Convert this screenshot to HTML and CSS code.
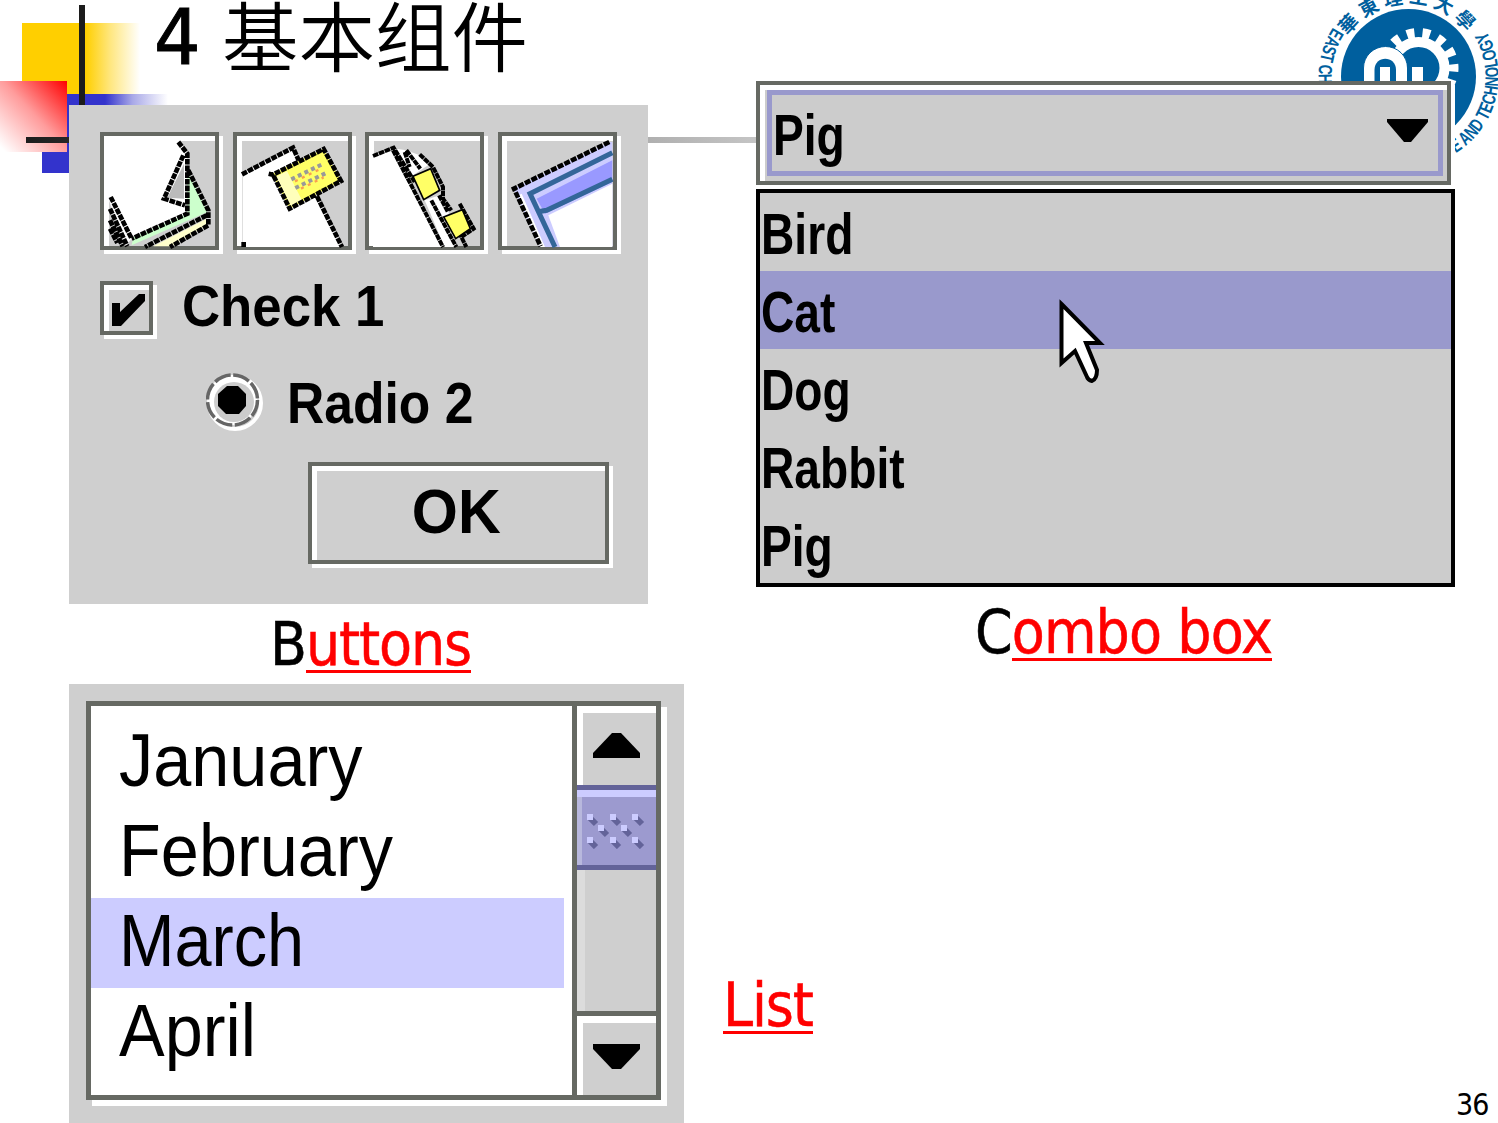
FILE: index.html
```html
<!DOCTYPE html>
<html lang="zh-CN">
<head>
<meta charset="utf-8">
<title>4 基本组件</title>
<link rel="stylesheet" href="styles.css">
</head>
<body>
<div class="slide">
  <div class="decor">
    <div class="decor-yellow"></div>
    <div class="decor-blue"></div>
    <div class="decor-red"></div>
    <div class="decor-vline"></div>
    <div class="decor-hline"></div>
  </div>
  <svg class="logo" viewBox="0 0 200 190" width="200" height="190">
    <defs>
      <path id="ring-latin" d="M33 27.500 A90 90 0 1 0 184 27.500"/>
      <path id="ring-han" d="M47.900 36.200 A73 73 0 0 1 171.700 40"/>
    </defs>
    <circle cx="108.5" cy="76.5" r="67.5" fill="#005f9e"/>
    <g fill="none" stroke="#fff">
      <circle cx="118.5" cy="68" r="26" stroke-width="10"/>
      <circle cx="118.5" cy="68" r="34.500" stroke-width="11" stroke-dasharray="7.500 7.980" stroke-dashoffset="4"/>
    </g>
    <path d="M63.500 96V68a22 21.500 0 0 1 44 0v28z" fill="#fff" stroke="#005f9e" stroke-width="1"/>
    <path d="M74.500 96V70c0-15 21.500-15 21.500 0v26z" fill="#005f9e"/>
    <path d="M80 67h10v29H80zM112 67h11v29H112z" fill="#fff"/>
    <path d="M107 60h5v36h-5z" fill="#005f9e"/>
    <text class="logo-latin"><textPath href="#ring-latin" textLength="382" lengthAdjust="spacingAndGlyphs">EAST CHINA UNIVERSITY OF SCIENCE AND TECHNOLOGY</textPath></text>
    <text class="logo-han"><textPath href="#ring-han">華東理工大學</textPath></text>
  </svg>

  <header class="title"><span class="title-num">4</span><span class="title-text">基本组件</span></header>

  <main class="columns">
    <section class="col-left">
      <div class="panel buttons-panel">
        <div class="icon-row">
          <div class="etched icon-btn">
            <svg viewBox="30 35 357 354">
              <path d="M57 60H270L290 95V280L125 355 105 378 57 240Z" fill="#fff"/>
              <path d="M292 160L300 165 352 275 125 375 130 350 292 280Z" fill="#cfc"/>
              <path d="M190 378L350 295V315L245 378Z" fill="#ffc"/>
              <path d="M282 130L232 232 282 235Z" fill="#bbb"/>
              <g fill="none" stroke="#000" stroke-width="14" stroke-dasharray="17 3">
                <path d="M265 65L292 100V280L125 355M280 105L222 235 285 255M295 150L355 270V315L240 380M350 285L165 380"/>
                <path d="M62 230L125 355M60 265L112 378M60 300L98 378M60 325L82 368"/>
              </g>
            </svg>
          </div>
          <div class="etched icon-btn">
            <svg viewBox="428 35 357 354">
              <path d="M457 160L608 80 625 120 545 165 595 265 680 228 755 380H457Z" fill="#fff"/>
              <path d="M545 160L700 85 752 182 598 265Z" fill="#ff6"/>
              <path d="M555 170L590 152 635 240 602 258Z" fill="#ffb"/>
              <g fill="none" stroke="#000" stroke-width="14" stroke-dasharray="17 3">
                <path d="M455 162L608 82 625 120M535 160L548 163 700 86 752 182 598 265 548 163M680 228L755 380M460 365V380"/>
              </g>
              <path d="M603 177L695 132M615 203L707 158" stroke="#999" stroke-width="12" stroke-dasharray="12 10"/>
              <path d="M614 183L690 146M632 205L700 171" stroke="#f9a050" stroke-width="7" stroke-dasharray="9 14"/>
            </svg>
          </div>
          <div class="etched icon-btn">
            <svg viewBox="16 35 357 354">
              <path d="M40 105L105 80 248 380H40ZM110 85L140 90 180 105 205 135 160 165ZM195 240L240 225 265 270 290 380H255Z" fill="#fff"/>
              <g fill="none" stroke="#000" stroke-width="12" stroke-dasharray="17 2">
                <path d="M40 107L102 82 165 185M100 90L160 205 250 380M140 90L182 145M135 95L150 140M180 102L220 140 250 200 250 235 275 270M238 225L265 275M300 250L342 325 305 350 320 380M215 240L290 380"/>
              </g>
              <path d="M160 168L213 145 240 210 192 238ZM252 290L308 268 332 325 288 355Z" fill="#ff6" stroke="#000" stroke-width="5"/>
            </svg>
          </div>
          <div class="etched icon-btn">
            <svg viewBox="414 35 357 354">
              <path d="M460 205L750 65H757V380H540Z" fill="#ccf"/>
              <path d="M530 235L757 120V185L555 280Z" fill="#99f"/>
              <path d="M565 285L757 190V380H600Z" fill="#fff"/>
              <path d="M475 225L485 220 555 380H540Z" fill="#fff"/>
              <path d="M757 97L510 220 585 380M530 275L560 270 757 177" fill="none" stroke="#369" stroke-width="15"/>
              <path d="M757 113L530 228" fill="none" stroke="#ccf" stroke-width="9"/>
              <path d="M748 65L462 205 542 378" fill="none" stroke="#000" stroke-width="14" stroke-dasharray="18 4"/>
            </svg>
          </div>
        </div>
        <div class="option">
          <div class="etched checkbox"><svg viewBox="0 0 53 54"><path d="M12 22H20V31L39 13H45V20L21 45H12Z"/></svg></div>
          <span class="swing check-label">Check 1</span>
        </div>
        <div class="option option-radio">
          <svg class="radio" viewBox="0 0 58 58">
            <circle cx="29" cy="30" r="26" fill="none" stroke="#fff" stroke-width="4"/>
            <circle cx="26.500" cy="27" r="25" fill="#fff" stroke="#666" stroke-width="3.500" stroke-dasharray="17 2.630"/>
            <circle cx="28" cy="29" r="20" fill="#ccc"/>
            <path d="M21 13H32L40 21V33L33 41H20L12 33V21Z"/>
          </svg>
          <span class="swing radio-label">Radio 2</span>
        </div>
        <div class="etched ok"><span class="swing ok-label">OK</span></div>
      </div>
      <p class="caption caption-buttons">B<a>uttons</a></p>
      <div class="list-line">
        <div class="panel list-panel">
          <div class="list-box">
            <ul class="months">
              <li><span>January</span></li>
              <li><span>February</span></li>
              <li class="selected"><span>March</span></li>
              <li><span>April</span></li>
            </ul>
            <div class="scrollbar">
              <div class="sb-btn"><svg viewBox="0 0 47 25"><path d="M0 25V20L19 0H28L47 20V25Z"/></svg></div>
              <div class="sb-thumb">
                <svg viewBox="0 0 60 38">
                  <path d="M4 7L10 13M27 7L33 13M50 7L56 13M15 18L21 24M38 18L44 24M4 30L10 36M27 30L33 36M50 30L56 36" stroke="#636399" stroke-width="6"/>
                  <path d="M1 3h6v6H1zM24 3h6v6h-6zM46 3h6v6h-6zM12 14h6v6h-6zM35 14h6v6h-6zM1 26h6v6H1zM24 26h6v6h-6zM46 26h6v6h-6z" fill="#ccf"/>
                </svg>
              </div>
              <div class="sb-track"></div>
              <div class="sb-btn sb-down"><svg viewBox="0 0 47 25"><path d="M0 0V5L19 25H28L47 5V0Z"/></svg></div>
            </div>
          </div>
        </div>
        <p class="caption caption-list"><a>List</a></p>
      </div>
    </section>

    <section class="col-right">
      <div class="etched combo">
        <div class="combo-field">
          <span class="swing item-text">Pig</span>
          <svg class="combo-arrow" viewBox="0 0 41 23"><path d="M0 0H41V3L24 23H17L0 3Z"/></svg>
        </div>
      </div>
      <ul class="popup">
        <li><span class="swing item-text">Bird</span></li>
        <li class="selected"><span class="swing item-text">Cat</span></li>
        <li><span class="swing item-text">Dog</span></li>
        <li><span class="swing item-text">Rabbit</span></li>
        <li><span class="swing item-text">Pig</span></li>
      </ul>
      <p class="caption caption-combo">C<a>ombo box</a></p>
    </section>
  </main>

  <svg class="pointer" viewBox="0 0 46 86"><path d="M2.500 5L41 44H27L38 71Q38 80 33 82Q29 81 28 78L16 52L2.500 64Z" fill="#fff" stroke="#000" stroke-width="4"/></svg>
  <div class="page-no">36</div>
</div>
</body>
</html>
```
FILE: styles.css
```css
* { box-sizing: border-box; }
body { margin: 0; background: #fff; }
p, ul { margin: 0; padding: 0; list-style: none; }
svg { display: block; }

.slide {
  position: relative;
  width: 1498px;
  height: 1123px;
  overflow: hidden;
  background: #fff;
  color: #000;
  font-family: "DejaVu Sans Condensed", "DejaVu Sans", "Noto Sans CJK SC", sans-serif;
  font-stretch: condensed;
}

/* slide master ornament, behind the content */
.decor div { position: absolute; }
.decor-yellow { left: 22px; top: 23px; width: 118px; height: 71px; background: linear-gradient(90deg, #ffcf00 54%, #ffe780 75%, #fff); }
.decor-blue { left: 42px; top: 94px; width: 126px; height: 79px; background: linear-gradient(90deg, #3333cc 50%, #a9a9e8 72%, #fff); }
.decor-red { left: 0; top: 81px; width: 67px; height: 71px; background: linear-gradient(to bottom left, #f00, #ff9c9c 48%, #fff 96%); }
.decor-vline { left: 79px; top: 5px; width: 6px; height: 110px; background: #1c1c1c; }
.decor-hline { left: 26px; top: 137px; width: 1300px; height: 6px; background: linear-gradient(90deg, #1c1c1c, #2a2a2a 4%, #b0b0b0 48%, #c4c4c4 56%, #fff); }

.logo { position: absolute; left: 1300px; top: 0; }
.logo text { fill: #005f9e; }
.logo-latin { font: bold 19px "Liberation Sans", sans-serif; }
.logo-han { font: bold 19px "Noto Sans CJK TC", sans-serif; letter-spacing: 4.800px; }

.title { position: relative; display: flex; height: 81px; padding-left: 154px; }
.title-num { width: 69px; font-family: "DejaVu Sans"; font-size: 77px; font-stretch: normal; transform: scaleX(.95); transform-origin: left; line-height: 76px; -webkit-text-stroke: 1px #000; }
.title-text { margin-top: -5px; margin-left: -1px; font-family: "Noto Sans CJK SC", sans-serif; font-size: 76.500px; font-weight: 350; line-height: 76px; }

.columns { position: relative; display: flex; padding-left: 69px; }
.col-left { width: 687px; padding-top: 24px; flex: none; }
.col-right { width: 699px; flex: none; }

.caption { font-size: 60px; letter-spacing: -1.120px; white-space: nowrap; -webkit-text-stroke: .5px; }
.caption a { color: #f00; display: inline-block; position: relative; }
.caption a::after { content: ""; position: absolute; left: 0; right: 0; bottom: 11px; height: 3px; background: #f00; }
.caption-buttons { height: 80px; padding-left: 201px; line-height: 80px; }
.caption-combo { padding-left: 219px; line-height: 90px; letter-spacing: -.9px; }
.caption-list { padding: 281px 0 0 39px; line-height: 80px; }
.caption-combo a::after { bottom: 16px; }

.panel { background: #cfcfcf; }
.etched { border: 4px solid #666963; background: #cfcfcf; box-shadow: inset 5px 5px 0 #fff, 4px 4px 0 #fff; }
.swing { display: inline-block; font-family: "Liberation Sans", Arial, sans-serif; font-weight: bold; font-stretch: normal; transform-origin: left; white-space: nowrap; }

.buttons-panel { width: 579px; height: 499px; padding: 27px 0 0 31px; display: flex; flex-direction: column; }
.icon-row { display: flex; gap: 13.700px; height: 118px; }
.icon-btn { width: 119px; height: 118px; }
.icon-btn svg { width: 119px; height: 118px; margin: -4px; }
.option { display: flex; align-items: center; height: 54px; margin-top: 31px; }
.checkbox { width: 53px; height: 54px; }
.checkbox svg { width: 53px; height: 54px; margin: -4px; }
.check-label { margin-left: 29px; font-size: 58px; line-height: 49px; transform: translateY(-3px) scaleX(.91); }
.option-radio { margin: 38px 0 0 106px; }
.radio { width: 58px; height: 58px; flex: none; position: relative; top: 2px; }
.radio-label { margin-left: 23px; font-size: 58px; transform: translateY(2px) scaleX(.89); }
.ok { width: 301px; height: 102px; margin: 35px 0 0 208px; display: flex; justify-content: center; align-items: center; }
.ok-label { font-size: 63px; transform-origin: center; transform: translate(-2px, -2px) scaleX(.94); }

.list-line { display: flex; }
.list-panel { width: 615px; height: 439px; padding: 17px; flex: none; }
.list-box { display: flex; width: 575px; height: 399px; border: 5px solid #666963; background: #fff; box-shadow: 6px 6px 0 #fff; }
.months { width: 481px; padding: 12px 8px 0 0; }
.months li { height: 90px; padding-left: 28px; font: 74px/86px "Liberation Sans", Arial, sans-serif; }
.months span { display: inline-block; transform: scaleX(.925); transform-origin: left; }
.months .selected { background: #ccf; }
.months .selected span { transform: scaleX(.9); }
.scrollbar { width: 84px; border-left: 5px solid #666963; display: flex; flex-direction: column; background: #cfcfcf; }
.sb-btn { height: 79px; padding-top: 27px; background: #cfcfcf; box-shadow: inset 6px 7px 0 #fff; }
.sb-btn svg { width: 47px; height: 25px; margin-left: 16px; }
.sb-thumb { height: 85px; padding: 21px 0 0 9px; background: #9c9acf; border: solid #636399; border-width: 5px 0; box-shadow: inset 0 7px 0 #ccf, inset 5px 0 0 #b8b8dd; }
.sb-thumb svg { width: 60px; height: 38px; }
.sb-track { height: 146px; border-bottom: 5px solid #666963; box-shadow: inset 8px 0 0 #dcdcdc; }
.sb-down { padding-top: 28px; }

.combo { width: 695px; height: 104px; padding: 5px 4px 5px 7px; background: #ccc; }
.combo-field { height: 86px; border: 5px solid #99c; display: flex; justify-content: space-between; }
.item-text { font-size: 57px; transform: scaleX(.81); }
.combo-field .item-text { margin-left: 1px; line-height: 80px; }
.combo-arrow { width: 41px; height: 23px; margin: 24px 10px 0 0; }
.popup { margin-top: 4px; border: 4px solid #000; background: #ccc; position: relative; }
.popup li { height: 78px; line-height: 83px; }
.popup .selected { background: #99c; }
.popup .item-text { margin-left: 1px; }

.pointer { position: absolute; left: 1059px; top: 299px; width: 46px; height: 86px; }
.page-no { position: absolute; left: 1456px; top: 1087px; font-size: 30px; letter-spacing: -1px; line-height: 35px; }
```
